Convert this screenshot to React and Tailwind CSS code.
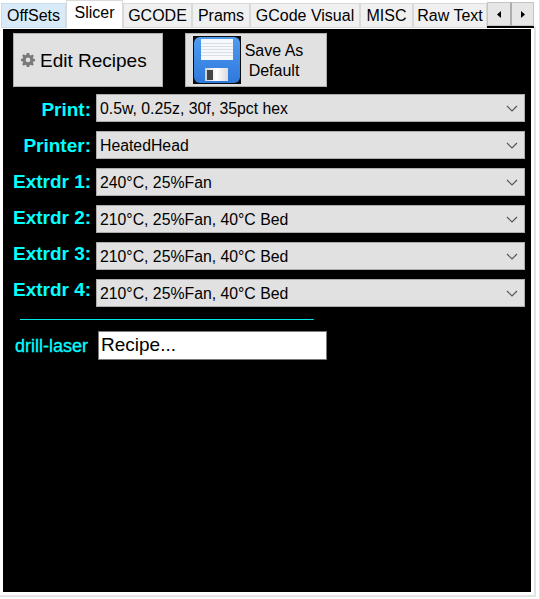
import React from "react";

const tabs = [
  { name: "OffSets", w: "w-[65px]", cls: "bg-[#d9ebf9] border-[#c9dcec] mt-[2px] h-[25px] ml-[1px]" },
  { name: "Slicer", w: "w-[57px]", cls: "bg-white border-[#d9d9d9] h-[28px] -mt-[1px] pb-[4px] border-b-0" },
  { name: "GCODE", w: "w-[69px]", cls: "bg-[#f0f0f0] border-[#d9d9d9] mt-[2px] h-[25px]" },
  { name: "Prams", w: "w-[58px]", cls: "bg-[#f0f0f0] border-[#d9d9d9] mt-[2px] h-[25px]" },
  { name: "GCode Visual", w: "w-[110px]", cls: "bg-[#f0f0f0] border-[#d9d9d9] mt-[2px] h-[25px]" },
  { name: "MISC", w: "w-[53px]", cls: "bg-[#f0f0f0] border-[#d9d9d9] mt-[2px] h-[25px]" },
  { name: "Raw Text", w: "w-[74px]", cls: "bg-[#f0f0f0] border-[#d9d9d9] mt-[2px] h-[25px]" },
];

// labels drift up against their selects in the original, hence one margin per row
const rows = [
  { label: "Print:", value: "0.5w, 0.25z, 30f, 35pct hex", top: "mt-[6px]" },
  { label: "Printer:", value: "HeatedHead", top: "mt-[5px]" },
  { label: "Extrdr 1:", value: "240°C, 25%Fan", top: "mt-[4px]" },
  { label: "Extrdr 2:", value: "210°C, 25%Fan, 40°C Bed", top: "mt-[3px]" },
  { label: "Extrdr 3:", value: "210°C, 25%Fan, 40°C Bed", top: "mt-[2px]" },
  { label: "Extrdr 4:", value: "210°C, 25%Fan, 40°C Bed", top: "mt-[1px]" },
];

function Gear() {
  return (
    <svg width="14" height="14" viewBox="0 0 14 14" className="shrink-0">
      <path
        fill="#7a7a7a"
        fillRule="evenodd"
        d="M5.7 0h2.6l.3 2 1.2.5L11.4 1.4l1.5 1.5-1.1 1.6.5 1.2 1.7.3v2.2l-1.7.3-.5 1.2 1.1 1.6-1.5 1.5-1.6-1.1-1.2.5-.3 1.8H5.7l-.3-1.8-1.2-.5-1.6 1.1-1.5-1.5 1.1-1.6-.5-1.2L0 8V5.8l1.7-.3.5-1.2-1.1-1.6 1.5-1.5 1.6 1.1 1.2-.5zM7 4.6a2.3 2.3 0 1 0 0 4.6 2.3 2.3 0 0 0 0-4.6z"
      />
    </svg>
  );
}

function Floppy() {
  return (
    <svg width="48" height="48" viewBox="0 0 48 48" className="shrink-0">
      <defs>
        <linearGradient id="disk" x1="0" y1="0" x2="0" y2="1">
          <stop offset="0" stopColor="#4f9cf0" />
          <stop offset="1" stopColor="#2f78dc" />
        </linearGradient>
        <linearGradient id="shutter" x1="0" y1="0" x2="1" y2="0">
          <stop offset="0" stopColor="#cfcfcf" />
          <stop offset="0.5" stopColor="#ffffff" />
          <stop offset="1" stopColor="#dcdcdc" />
        </linearGradient>
      </defs>
      <rect width="48" height="48" fill="#0c0c0c" />
      <rect x="1" y="1" width="46" height="46" rx="6" fill="url(#disk)" />
      <rect x="8" y="3" width="32" height="21" fill="#f6f8fc" />
      <path d="M8 7.5h32M8 10.5h32M8 13.5h32M8 16.5h32M8 19.5h32" stroke="#d9dfe9" strokeWidth="1" />
      <rect x="12" y="32" width="23" height="13" fill="url(#shutter)" />
      <rect x="14" y="34" width="6" height="10" fill="#454545" />
    </svg>
  );
}

function Chevron() {
  return (
    <svg width="12" height="7" viewBox="0 0 12 7" className="shrink-0">
      <path d="M1 1l5 5 5-5" fill="none" stroke="#555" strokeWidth="1.2" />
    </svg>
  );
}

function ScrollArrow({ points }) {
  return (
    <svg width="4" height="7" viewBox="0 0 4 7">
      <polygon points={points} fill="#000" />
    </svg>
  );
}

export default function App() {
  return (
    <div className="w-[540px] h-[599px] bg-white overflow-hidden border-r border-[#e3e3e3] font-['Liberation_Sans',Arial,sans-serif]">
      <div className="flex h-[27px] items-start pt-[1px]">
        {tabs.map((tab) => (
          <div
            key={tab.name}
            className={`${tab.w} ${tab.cls} shrink-0 border flex items-center justify-center text-[16px] text-black whitespace-nowrap`}
          >
            {tab.name}
          </div>
        ))}
        <div className="flex w-[47px] h-[26px] mt-[1px] shrink-0 border-b-2 border-black">
          <div className="w-[24px] bg-[#e6e6e6] border border-[#c4c4c4] border-r-[#adadad] flex items-center justify-center">
            <ScrollArrow points="4,0 4,7 0,3.5" />
          </div>
          <div className="flex-1 bg-[#e6e6e6] border border-[#c4c4c4] border-l-[#adadad] flex items-center justify-center">
            <ScrollArrow points="0,0 0,7 4,3.5" />
          </div>
        </div>
      </div>

      <div className="h-[570px] w-[536px] pl-[3px] pt-[2px] pr-[3px] pb-[3px] border-r-2 border-b-2 border-[#e3e3e3]">
        <div className="bg-black h-full w-[528px] pl-[10px] pr-[6px] pt-[4px] flex flex-col">
          <div className="flex gap-[22px] h-[54px]">
            <div className="w-[150px] bg-[#e1e1e1] border border-[#adadad] flex items-center pl-[7px] gap-[5px] text-[19px] text-black">
              <Gear />
              <span className="mt-[2px]">Edit Recipes</span>
            </div>
            <div className="w-[142px] bg-[#e1e1e1] border border-[#adadad] flex items-center pl-[7px] text-[16px] leading-[20px] text-black">
              <Floppy />
              <span className="w-[66px] text-center mt-[2px]">
                Save As
                <br />
                Default
              </span>
            </div>
          </div>

          <div className="flex flex-col gap-[9px] mt-[7px]">
            {rows.map((row) => (
              <div key={row.label} className="flex items-start h-[28px]">
                <div className={`${row.top} w-[78px] text-right text-[19px] leading-[20px] font-bold text-[#00ffff] whitespace-nowrap mr-[5px]`}>
                  {row.label}
                </div>
                <div className="w-[429px] h-[28px] bg-[#e1e1e1] border border-[#adadad] flex items-center justify-between pl-[3px] pr-[6px] text-[15.8px] text-black">
                  <span className="mt-[2px]">{row.value}</span>
                  <Chevron />
                </div>
              </div>
            ))}
          </div>

          <div className="h-[13px] w-[294px] ml-[7px] text-[12px] leading-[13px] text-[#00ffff] overflow-hidden whitespace-nowrap">
            ____________________________________________
          </div>

          <div className="flex items-center h-[29px] mt-[11px]">
            <div className="w-[75px] text-right text-[18px] text-[#00ffff] [-webkit-text-stroke:0.3px_#00ffff] whitespace-nowrap mt-[2px]">
              drill-laser
            </div>
            <div className="w-[229px] h-[29px] ml-[10px] bg-white border border-[#7a7a7a] flex items-center pl-[2px] text-[19px] text-black">
              Recipe...
            </div>
          </div>
        </div>
      </div>
    </div>
  );
}
